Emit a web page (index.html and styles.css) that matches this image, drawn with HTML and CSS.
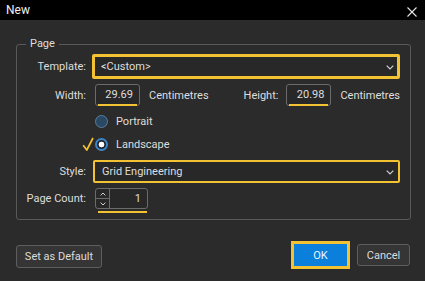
FILE: index.html
```html
<!DOCTYPE html>
<html lang="en">
<head>
<meta charset="utf-8">
<title>New</title>
<link rel="stylesheet" href="styles.css">
</head>
<body>
<div class="dialog">
  <div class="titlebar">
    <span class="title">New</span>
    <svg class="close" viewBox="0 0 10 10"><path d="M0.5 0.5L9.5 9.5M9.5 0.5L0.5 9.5" stroke="#e6e6e6" stroke-width="1.1" fill="none"/></svg>
  </div>
  <div class="content">
    <fieldset class="group">
      <legend>Page</legend>
      <div class="row r-template">
        <span class="lbl">Template:</span>
        <div class="combo combo-focus">
          <span>&lt;Custom&gt;</span>
          <svg class="chev" viewBox="0 0 8 5"><path d="M0.7 0.7L4 4L7.3 0.7" stroke="#d0d0d0" stroke-width="1.2" fill="none"/></svg>
        </div>
      </div>
      <div class="row r-size">
        <span class="lbl">Width:</span>
        <span class="input">29.69</span>
        <span class="unit">Centimetres</span>
        <div class="height-group">
          <span class="hlbl">Height:</span>
          <span class="input">20.98</span>
          <span class="unit">Centimetres</span>
        </div>
      </div>
      <div class="row r-radio">
        <span class="lbl"></span>
        <span class="radio"></span>
        <span>Portrait</span>
      </div>
      <div class="row r-radio r-radio2">
        <span class="lbl"></span>
        <svg class="check" viewBox="0 0 12 14"><path d="M1.2 8.2L4.8 13L11 1" stroke="#f0c232" stroke-width="1.7" fill="none" stroke-linejoin="round"/></svg>
        <span class="radio on"></span>
        <span>Landscape</span>
      </div>
      <div class="row r-style">
        <span class="lbl">Style:</span>
        <div class="combo combo-style">
          <span>Grid Engineering</span>
          <svg class="chev" viewBox="0 0 8 5"><path d="M0.7 0.7L4 4L7.3 0.7" stroke="#d0d0d0" stroke-width="1.2" fill="none"/></svg>
        </div>
      </div>
      <div class="row r-count">
        <span class="lbl">Page Count:</span>
        <div class="spin">
          <div class="spin-btns">
            <span class="spin-btn"><svg viewBox="0 0 6 4"><path d="M0.6 3.4L3 1L5.4 3.4" stroke="#d0d0d0" stroke-width="1" fill="none"/></svg></span>
            <span class="spin-btn"><svg viewBox="0 0 6 4"><path d="M0.6 0.6L3 3L5.4 0.6" stroke="#d0d0d0" stroke-width="1" fill="none"/></svg></span>
          </div>
          <span class="spin-val">1</span>
        </div>
      </div>
    </fieldset>
    <div class="footer">
      <button class="btn default">Set as Default</button>
      <button class="btn ok">OK</button>
      <button class="btn cancel">Cancel</button>
    </div>
  </div>
</div>
</body>
</html>
```
FILE: styles.css
```css
html, body {
  margin: 0;
  padding: 0;
}
body {
  background: #2b2b2b;
  font-family: Roboto, "Liberation Sans", sans-serif;
  font-size: 11px;
  color: #dedede;
}
.dialog {
  width: 425px;
  height: 281px;
  display: flex;
  flex-direction: column;
}
.titlebar {
  height: 20px;
  flex: none;
  background: #000;
  display: flex;
  align-items: center;
  justify-content: space-between;
  padding: 0 8px 0 6px;
  color: #f0f0f0;
  font-size: 12px;
}
.close {
  width: 10px;
  height: 10px;
  margin-top: 4px;
}
.content {
  flex: 1;
  padding-top: 17px;
}
.group {
  margin: 0 14px 0 16px;
  padding: 3px 10px 10px 0;
  border: 1px solid #595959;
  border-radius: 3px;
  min-width: 0;
}
.group legend {
  margin-left: 9px;
  padding: 0 4px;
  line-height: 14px;
  font-size: 11px;
}
.row {
  display: flex;
  align-items: center;
}
.lbl {
  width: 69px;
  flex: none;
  text-align: right;
  margin-right: 9px;
}
.r-template { height: 25px; }
.r-size { height: 22px; margin-top: 5px; }
.r-radio { height: 20px; margin-top: 5px; }
.r-radio2 { margin-top: 3px; }
.r-style { height: 23px; margin-top: 6px; }
.r-count { height: 21px; margin-top: 5px; }

.combo {
  flex: 1;
  box-sizing: border-box;
  height: 25px;
  border: 3px solid #f2c232;
  border-radius: 2px;
  margin-left: -3px;
  background: #282828;
  display: flex;
  align-items: center;
  justify-content: space-between;
  padding: 0 3px 0 6px;
}
.combo-style {
  height: 23px;
  border-width: 2px;
  margin-left: -2px;
  padding: 0 4px 0 7px;
}
.chev {
  width: 8px;
  height: 5px;
  margin-top: 1px;
}
.input {
  position: relative;
  width: 45px;
  height: 22px;
  box-sizing: border-box;
  border: 1px solid #6b6b6b;
  border-radius: 3px;
  background: #282828;
  text-align: right;
  padding-right: 6px;
  line-height: 20px;
}
.input::after {
  content: "";
  position: absolute;
  left: 2px;
  right: 2px;
  bottom: -1px;
  height: 2px;
  background: #f2c232;
}
.unit {
  margin-left: 9px;
}
.height-group {
  margin-left: auto;
  display: flex;
  align-items: center;
}
.hlbl {
  margin-right: 8px;
}
.radio {
  width: 13px;
  height: 13px;
  box-sizing: border-box;
  border-radius: 50%;
  border: 1px solid #587f9f;
  background: #2b4862;
  margin-right: 8px;
  flex: none;
}
.radio.on {
  border: 2px solid #3c86c8;
  background: radial-gradient(circle, #ffffff 0 2.6px, #1d232a 3.2px);
}
.check {
  width: 12px;
  height: 14px;
  margin-left: -13px;
  margin-right: 1px;
  margin-top: -1px;
  flex: none;
}
.spin {
  position: relative;
  display: flex;
  width: 53px;
  height: 21px;
  box-sizing: border-box;
  border: 1px solid #6b6b6b;
  border-radius: 3px;
  background: #282828;
}
.spin::after {
  content: "";
  position: absolute;
  left: 2px;
  right: 0;
  bottom: -5px;
  height: 2px;
  background: #f2c232;
}
.spin-btns {
  display: flex;
  flex-direction: column;
  width: 13px;
  flex: none;
  border-right: 1px solid #6b6b6b;
}
.spin-btn {
  flex: 1;
  display: flex;
  align-items: center;
  justify-content: center;
}
.spin-btn + .spin-btn {
  border-top: 1px solid #6b6b6b;
}
.spin-btn svg {
  width: 6px;
  height: 4px;
}
.spin-val {
  flex: 1;
  text-align: right;
  padding-right: 6px;
  line-height: 19px;
}
.footer {
  display: flex;
  align-items: center;
  padding: 21px 15px 0 16px;
}
.btn {
  font: inherit;
  color: #dcdcdc;
  height: 23px;
  box-sizing: border-box;
  border: 1px solid #5e5e5e;
  border-radius: 3px;
  background: #353535;
  padding: 0;
  display: flex;
  align-items: center;
  justify-content: center;
}
.default {
  width: 86px;
  margin-top: 2px;
}
.ok {
  margin: 0 0 0 auto;
  width: 59px;
  height: 28px;
  border: 3px solid #f2c232;
  border-radius: 0;
  background: #0a80dc;
  color: #eaf4ff;
}
.cancel {
  margin: 0 0 0 7px;
  width: 53px;
  height: 22px;
}
```
